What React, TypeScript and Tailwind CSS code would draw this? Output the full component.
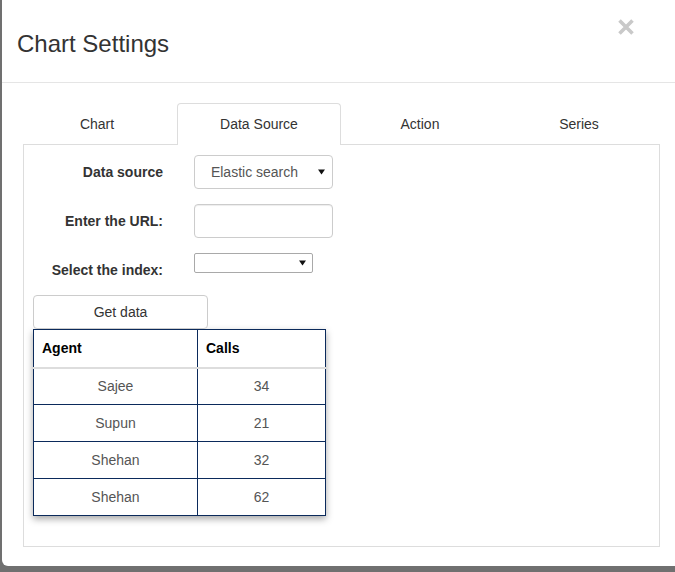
import React from "react";

const rows = [
  { agent: "Sajee", calls: 34 },
  { agent: "Supun", calls: 21 },
  { agent: "Shehan", calls: 32 },
  { agent: "Shehan", calls: 62 },
];

const tabs = [
  { label: "Chart", w: "w-[160px]" },
  { label: "Data Source", w: "w-[164px]", active: true },
  { label: "Action", w: "w-[158px]" },
  { label: "Series", w: "w-[160px]" },
];

function Caret({ className }: { className?: string }) {
  return (
    <svg className={className} width="7" height="6" viewBox="0 0 7 6">
      <path d="M0 0.5 H7 L3.5 5.5 Z" fill="#111" />
    </svg>
  );
}

export default function App() {
  return (
    <div
      className="w-[675px] h-[572px] overflow-hidden bg-[#707070] text-[14px] text-[#333]"
      style={{ fontFamily: '"Liberation Sans", Arial, sans-serif' }}
    >
      <div className="ml-[2px] w-[678px] h-[566px] bg-white rounded-bl-[6px]">
        {/* Header */}
        <div className="h-[83px] border-b border-[#e5e5e5] pl-[15px] pr-[46px] flex items-start justify-between">
          <h4 className="pt-[27px] text-[24px] leading-[34px] text-[#333]">Chart Settings</h4>
          <button className="mt-[19px]" aria-label="Close">
            <svg width="16" height="16" viewBox="0 0 16 16">
              <path d="M1.5 1.5 L14.5 14.5 M14.5 1.5 L1.5 14.5" stroke="#c9c9c9" strokeWidth="3.6" />
            </svg>
          </button>
        </div>

        {/* Body */}
        <div className="pt-[20px]">
          <div className="flex ml-[15px] relative z-10">
            {tabs.map((t) =>
              t.active ? (
                <div
                  key={t.label}
                  className={`${t.w} h-[42px] bg-white border border-b-0 border-[#ddd] rounded-t-[4px] flex items-center justify-center text-[#333] -mb-px`}
                >
                  {t.label}
                </div>
              ) : (
                <div key={t.label} className={`${t.w} h-[42px] -mb-px flex items-center justify-center text-[#333]`}>
                  {t.label}
                </div>
              )
            )}
          </div>

          <div className="ml-[21px] w-[637px] h-[403px] border border-[#ddd] pl-[9px] pt-[10px]">
            {/* Data source */}
            <div className="flex items-center h-[34px]">
              <label className="w-[130px] text-right font-bold">Data source</label>
              <div className="ml-[31px] w-[139px] h-[34px] border border-[#ccc] rounded-[4px] flex items-center relative">
                <span className="flex-1 text-center text-[#555] pr-[4px]">Elastic search</span>
                <Caret className="mr-[7px]" />
              </div>
            </div>

            {/* URL */}
            <div className="flex items-center h-[34px] mt-[15px]">
              <label className="w-[130px] text-right font-bold">Enter the URL:</label>
              <input
                className="ml-[31px] w-[139px] h-[34px] border border-[#ccc] rounded-[4px] shadow-[inset_0_1px_1px_rgba(0,0,0,0.075)] outline-none px-2"
                type="text"
              />
            </div>

            {/* Index */}
            <div className="flex items-start mt-[15px] h-[27px]">
              <label className="w-[130px] text-right font-bold pt-[7px] leading-[20px]">Select the index:</label>
              <div className="ml-[31px] w-[119px] h-[20px] border border-[#a9a9a9] rounded-[2px] flex items-center justify-end">
                <Caret className="mr-[6px]" />
              </div>
            </div>

            <button className="mt-[15px] w-[175px] h-[34px] border border-[#ccc] rounded-[4px] text-[#333] bg-white">
              Get data
            </button>

            <table className="border-collapse w-[293px] shadow-[0_3px_7px_rgba(0,0,0,0.35)]">
              <thead>
                <tr className="h-[38px]">
                  <th className="w-[164px] border border-[#0b2a5b] border-b-[2px] border-b-[#ddd] text-left font-bold text-black pl-[8px]">
                    Agent
                  </th>
                  <th className="border border-[#0b2a5b] border-b-[2px] border-b-[#ddd] text-left font-bold text-black pl-[8px]">
                    Calls
                  </th>
                </tr>
              </thead>
              <tbody>
                {rows.map((r, i) => (
                  <tr key={i} className="h-[37px]">
                    <td className="border border-[#0b2a5b] text-center text-[#555]">{r.agent}</td>
                    <td className="border border-[#0b2a5b] text-center text-[#555]">{r.calls}</td>
                  </tr>
                ))}
              </tbody>
            </table>
          </div>
        </div>
      </div>
    </div>
  );
}
